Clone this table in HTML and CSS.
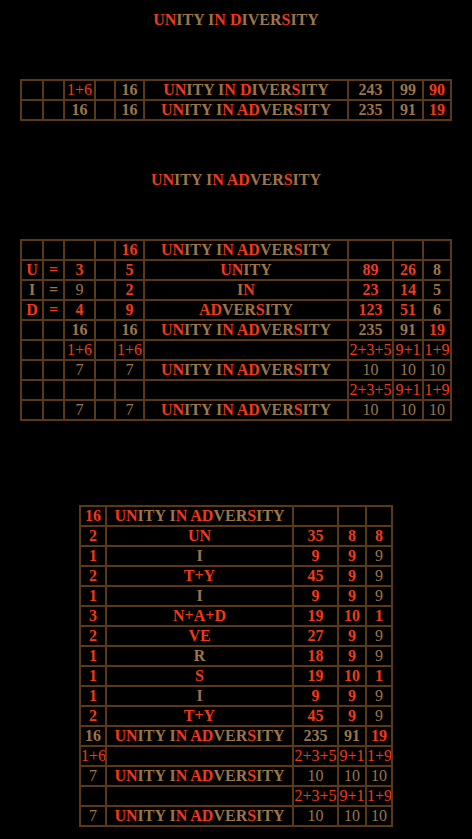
FILE: index.html
```html
<!DOCTYPE html>
<html lang="en">
<head>
  <meta charset="UTF-8">
  <meta name="viewport" content="width=device-width, initial-scale=1.0">
  <title>Unity in Diversity</title>
  <link rel="stylesheet" href="styles.css">
</head>
<body>

<h1 class="title title-first"><span class="r">UN</span>ITY I<span class="r">N</span> <span class="r">D</span>IVER<span class="r">S</span>ITY</h1>

<table class="grid wide first">
  <colgroup>
    <col class="w22"><col class="w21"><col class="w31"><col class="w20"><col class="w29">
    <col class="w204"><col class="w45"><col class="w30"><col class="w28">
  </colgroup>
  <tr>
    <td></td><td></td><td class="r n">1+6</td><td></td><td>16</td>
    <td><span class="r">UN</span>ITY I<span class="r">N</span> <span class="r">D</span>IVER<span class="r">S</span>ITY</td>
    <td>243</td><td>99</td><td class="r">90</td>
  </tr>
  <tr>
    <td></td><td></td><td>16</td><td></td><td>16</td>
    <td><span class="r">UN</span>ITY I<span class="r">N</span> <span class="r">AD</span>VER<span class="r">S</span>ITY</td>
    <td>235</td><td>91</td><td class="r">19</td>
  </tr>
</table>

<h1 class="title title-second"><span class="r">UN</span>ITY I<span class="r">N</span> <span class="r">AD</span>VER<span class="r">S</span>ITY</h1>

<table class="grid wide second">
  <colgroup>
    <col class="w22"><col class="w21"><col class="w31"><col class="w20"><col class="w29">
    <col class="w204"><col class="w45"><col class="w30"><col class="w28">
  </colgroup>
  <tr>
    <td></td><td></td><td></td><td></td><td class="r">16</td>
    <td><span class="r">UN</span>ITY I<span class="r">N</span> <span class="r">AD</span>VER<span class="r">S</span>ITY</td>
    <td></td><td></td><td></td>
  </tr>
  <tr>
    <td class="r">U</td><td class="r">=</td><td class="r">3</td><td></td><td class="r">5</td>
    <td><span class="r">UN</span>ITY</td>
    <td class="r">89</td><td class="r">26</td><td>8</td>
  </tr>
  <tr>
    <td>I</td><td>=</td><td class="n">9</td><td></td><td class="r">2</td>
    <td>I<span class="r">N</span></td>
    <td class="r">23</td><td class="r">14</td><td>5</td>
  </tr>
  <tr>
    <td class="r">D</td><td class="r">=</td><td class="r">4</td><td></td><td class="r">9</td>
    <td><span class="r">AD</span>VER<span class="r">S</span>ITY</td>
    <td class="r">123</td><td class="r">51</td><td>6</td>
  </tr>
  <tr>
    <td></td><td></td><td>16</td><td></td><td>16</td>
    <td><span class="r">UN</span>ITY I<span class="r">N</span> <span class="r">AD</span>VER<span class="r">S</span>ITY</td>
    <td>235</td><td>91</td><td class="r">19</td>
  </tr>
  <tr>
    <td></td><td></td><td class="r n">1+6</td><td></td><td class="r n">1+6</td>
    <td></td>
    <td class="r n">2+3+5</td><td class="r n">9+1</td><td class="r n">1+9</td>
  </tr>
  <tr>
    <td></td><td></td><td class="n">7</td><td></td><td class="n">7</td>
    <td><span class="r">UN</span>ITY I<span class="r">N</span> <span class="r">AD</span>VER<span class="r">S</span>ITY</td>
    <td class="n">10</td><td class="n">10</td><td class="n">10</td>
  </tr>
  <tr>
    <td></td><td></td><td></td><td></td><td></td>
    <td></td>
    <td class="r n">2+3+5</td><td class="r n">9+1</td><td class="r n">1+9</td>
  </tr>
  <tr>
    <td></td><td></td><td class="n">7</td><td></td><td class="n">7</td>
    <td><span class="r">UN</span>ITY I<span class="r">N</span> <span class="r">AD</span>VER<span class="r">S</span>ITY</td>
    <td class="n">10</td><td class="n">10</td><td class="n">10</td>
  </tr>
</table>

<table class="grid narrow third">
  <colgroup>
    <col class="w26"><col class="w187"><col class="w45"><col class="w28"><col class="w26">
  </colgroup>
  <tr>
    <td class="r">16</td>
    <td><span class="r">UN</span>ITY I<span class="r">N</span> <span class="r">AD</span>VER<span class="r">S</span>ITY</td>
    <td></td><td></td><td></td>
  </tr>
  <tr><td class="r">2</td><td class="r">UN</td><td class="r">35</td><td class="r">8</td><td class="r">8</td></tr>
  <tr><td class="r">1</td><td>I</td><td class="r">9</td><td class="r">9</td><td class="n">9</td></tr>
  <tr><td class="r">2</td><td class="r">T+Y</td><td class="r">45</td><td class="r">9</td><td class="n">9</td></tr>
  <tr><td class="r">1</td><td>I</td><td class="r">9</td><td class="r">9</td><td class="n">9</td></tr>
  <tr><td class="r">3</td><td class="r">N+A+D</td><td class="r">19</td><td class="r">10</td><td class="r">1</td></tr>
  <tr><td class="r">2</td><td class="r">VE</td><td class="r">27</td><td class="r">9</td><td class="n">9</td></tr>
  <tr><td class="r">1</td><td>R</td><td class="r">18</td><td class="r">9</td><td class="n">9</td></tr>
  <tr><td class="r">1</td><td class="r">S</td><td class="r">19</td><td class="r">10</td><td class="r">1</td></tr>
  <tr><td class="r">1</td><td>I</td><td class="r">9</td><td class="r">9</td><td class="n">9</td></tr>
  <tr><td class="r">2</td><td class="r">T+Y</td><td class="r">45</td><td class="r">9</td><td class="n">9</td></tr>
  <tr>
    <td>16</td>
    <td><span class="r">UN</span>ITY I<span class="r">N</span> <span class="r">AD</span>VER<span class="r">S</span>ITY</td>
    <td>235</td><td>91</td><td class="r">19</td>
  </tr>
  <tr>
    <td class="r n">1+6</td><td></td>
    <td class="r n">2+3+5</td><td class="r n">9+1</td><td class="r n">1+9</td>
  </tr>
  <tr>
    <td class="n">7</td>
    <td><span class="r">UN</span>ITY I<span class="r">N</span> <span class="r">AD</span>VER<span class="r">S</span>ITY</td>
    <td class="n">10</td><td class="n">10</td><td class="n">10</td>
  </tr>
  <tr>
    <td></td><td></td>
    <td class="r n">2+3+5</td><td class="r n">9+1</td><td class="r n">1+9</td>
  </tr>
  <tr>
    <td class="n">7</td>
    <td><span class="r">UN</span>ITY I<span class="r">N</span> <span class="r">AD</span>VER<span class="r">S</span>ITY</td>
    <td class="n">10</td><td class="n">10</td><td class="n">10</td>
  </tr>
</table>

</body>
</html>
```

FILE: styles.css
```css
body {
  margin: 0;
  background-color: #000;
  color: #9a764a;
  font-family: "Liberation Serif", "Times New Roman", serif;
  font-size: 16px;
  font-weight: bold;
}
.r {
  color: #ee3a1a;
}
.n {
  font-weight: normal;
}
.title {
  margin: 0;
  font-size: 16px;
  line-height: 18px;
  text-align: center;
}
.title-first {
  padding-top: 11px;
}
.title-second {
  margin-top: 50px;
}
/* Number grids */
.grid {
  border-collapse: collapse;
  table-layout: fixed;
  margin: 0 auto;
}
.grid td {
  border: 2px solid #5a3914;
  padding: 0;
  height: 18px;
  line-height: 18px;
  text-align: center;
  white-space: nowrap;
  overflow: hidden;
}
.wide {
  width: 432px;
}
.narrow {
  width: 314px;
}
.first {
  margin-top: 50px;
}
.second {
  margin-top: 50px;
}
.third {
  margin-top: 84px;
}
.w20 { width: 20px; }
.w21 { width: 21px; }
.w22 { width: 22px; }
.w26 { width: 26px; }
.w28 { width: 28px; }
.w29 { width: 29px; }
.w30 { width: 30px; }
.w31 { width: 31px; }
.w45 { width: 45px; }
.w187 { width: 187px; }
.w204 { width: 204px; }
```
